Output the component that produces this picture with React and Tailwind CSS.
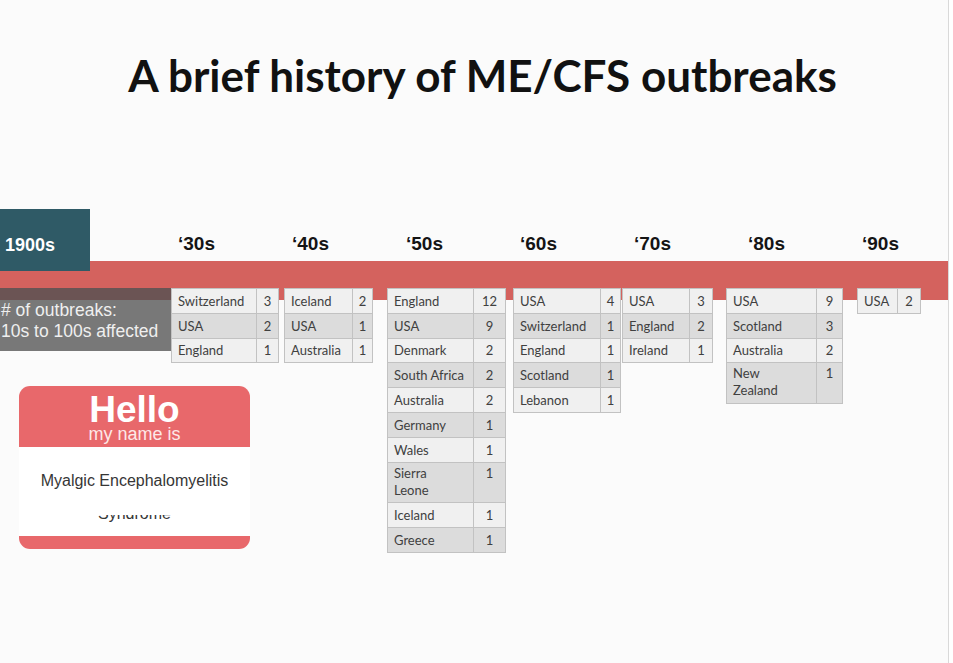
import React from "react";

const decades = ["‘30s", "‘40s", "‘50s", "‘60s", "‘70s", "‘80s", "‘90s"];

const tables = [
  { ml: "ml-0", nameW: "w-[85px]", numW: "w-[22px]", rows: [["Switzerland", 3], ["USA", 2], ["England", 1]] },
  { ml: "ml-[5px]", nameW: "w-[68px]", numW: "w-[20px]", rows: [["Iceland", 2], ["USA", 1], ["Australia", 1]] },
  {
    ml: "ml-[14px]",
    nameW: "w-[86px]",
    numW: "w-[32px]",
    rows: [
      ["England", 12],
      ["USA", 9],
      ["Denmark", 2],
      ["South Africa", 2],
      ["Australia", 2],
      ["Germany", 1],
      ["Wales", 1],
      ["Sierra Leone", 1, true],
      ["Iceland", 1],
      ["Greece", 1],
    ],
  },
  {
    ml: "ml-[7px]",
    nameW: "w-[87px]",
    numW: "w-[20px]",
    rows: [["USA", 4], ["Switzerland", 1], ["England", 1], ["Scotland", 1], ["Lebanon", 1]],
  },
  { ml: "ml-[1px]", nameW: "w-[67px]", numW: "w-[23px]", rows: [["USA", 3], ["England", 2], ["Ireland", 1]] },
  {
    ml: "ml-[13px]",
    nameW: "w-[90px]",
    numW: "w-[26px]",
    rows: [["USA", 9], ["Scotland", 3], ["Australia", 2], ["New Zealand", 1, true]],
  },
  { ml: "ml-[14px]", nameW: "w-[40px]", numW: "w-[23px]", rows: [["USA", 2]] },
];

// one hanging table under the red bar
const DecadeTable = ({ table }) => (
  <div className={`${table.ml} shrink-0 border-t border-l border-[#c2c2c2] font-['Lato',sans-serif] text-[13px] text-[#404040]`}>
    {table.rows.map(([name, count, tall], i) => {
      const bg = i % 2 === 0 ? "bg-[#f0f0f0]" : "bg-[#dcdcdc]";
      const h = tall ? "h-[40.5px] items-start pt-[2px] leading-[17px]" : "h-[24.8px] items-center leading-[16px]";
      return (
        <div key={i} className="flex">
          <div className={`${table.nameW} ${h} ${bg} flex pl-[6px] pr-[2px] border-r border-b border-[#c2c2c2]`}>
            <span className={tall ? "w-[48px]" : "whitespace-nowrap"}>{name}</span>
          </div>
          <div className={`${table.numW} ${h} ${bg} flex justify-center border-r border-b border-[#c2c2c2]`}>
            {count}
          </div>
        </div>
      );
    })}
  </div>
);

const NameTag = () => (
  <div className="ml-[19px] mt-[35px] w-[231px] font-['Liberation_Sans',Arial,sans-serif]">
    <div className="h-[61px] rounded-t-[11px] bg-[#e8686b] text-center text-white pt-[5px]">
      <div className="text-[37px] font-bold leading-[37px]">Hello</div>
      <div className="-mt-[3px] text-[18px] leading-[18px] text-[#fde8e8]">my name is</div>
    </div>
    <div className="h-[89px] bg-white text-center text-[16px] leading-[20px] text-[#363636] pt-[24px]">
      <div>Myalgic Encephalomyelitis</div>
      {/* second line only shows its lower half, as on the slide */}
      <div className="mt-[24px] h-[10px] overflow-hidden">
        <div className="-mt-[11px]">Syndrome</div>
      </div>
    </div>
    <div className="h-[13px] rounded-b-[11px] bg-[#e8686b]" />
  </div>
);

export default function App() {
  return (
    <div className="w-[953px] h-[663px] bg-white overflow-hidden">
      <div className="w-[949px] h-[663px] bg-[#fbfbfb] border-r border-[#d9d9d9]">
        <h1 className="pt-[49px] pl-[17px] text-center font-['Lato',sans-serif] font-bold text-[44px] leading-[52px] text-[#111]">
          A brief history of ME/CFS outbreaks
        </h1>

        <div className="mt-[108px]">
          {/* decade labels */}
          <div className="flex h-[52px] font-['Liberation_Sans',Arial,sans-serif] font-bold">
            <div className="relative z-10 w-[90px] h-[62px] shrink-0 bg-[#2f5a66] pl-[5px] pt-[26px] text-[18px] leading-[20px] text-white">
              1900s
            </div>
            <div className="ml-[88px] flex">
              {decades.map((d) => (
                <div key={d} className="w-[114px] shrink-0 pt-[25px] text-[19px] leading-[20px] text-[#141414]">
                  {d}
                </div>
              ))}
            </div>
          </div>

          {/* timeline bar */}
          <div className="h-[39px] w-[948px] bg-[#d4625e]" />

          {/* outbreak tables */}
          <div className="-mt-[12px] flex items-start">
            <div className="w-[171px] shrink-0">
              <div className="h-[12px] bg-[#6b5454]" />
              <div className="h-[51px] bg-[#787878] pl-[1px] font-['Liberation_Sans',Arial,sans-serif] text-[17.5px] leading-[21px] text-[#efefef] whitespace-nowrap">
                <div># of outbreaks:</div>
                <div>10s to 100s affected</div>
              </div>
              <NameTag />
            </div>
            {tables.map((t, i) => (
              <DecadeTable key={i} table={t} />
            ))}
          </div>
        </div>
      </div>
    </div>
  );
}
